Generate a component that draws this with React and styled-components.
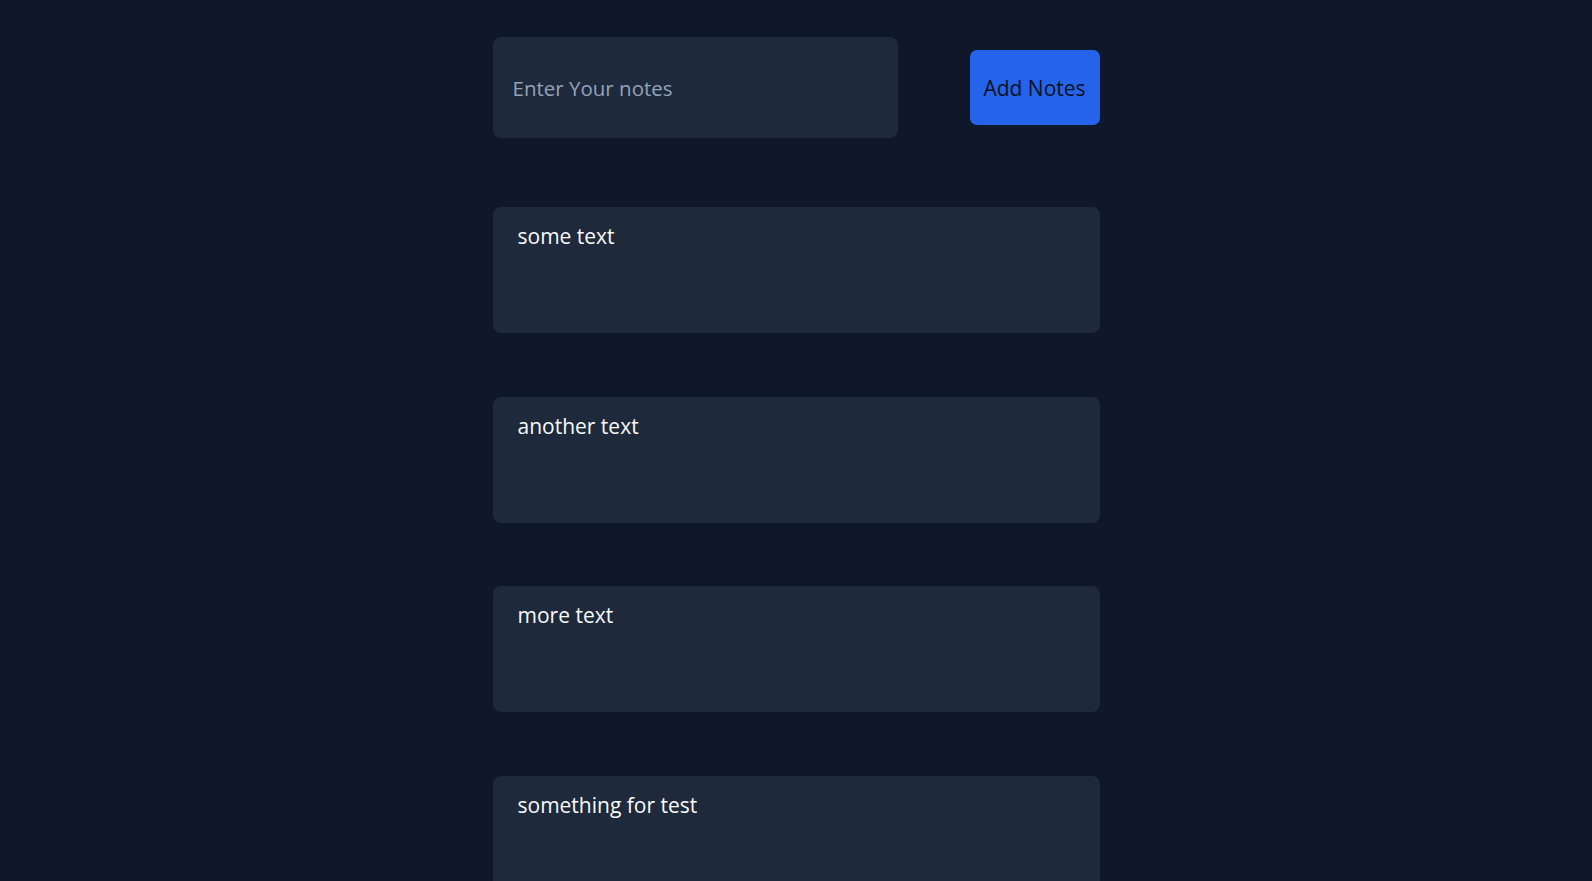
import React from 'react';
import { useState } from 'react';
import styled, { createGlobalStyle } from 'styled-components';

const colors = {
  page: '#0f172a',
  card: '#1e293b',
  blue: '#2563eb',
  placeholder: '#94a3b8',
  text: '#f8fafc',
};

const GlobalStyle = createGlobalStyle`
  html, body {
    margin: 0;
    background: ${colors.page};
    font-family: 'Open Sans', 'Noto Sans', sans-serif;
  }
`;

const Page = styled.main`
  min-height: 100vh;
  display: flex;
  justify-content: center;
  padding-top: 37px;
  box-sizing: border-box;
`;

const Column = styled.div`
  width: 607px;
  display: flex;
  flex-direction: column;
`;

const Header = styled.form`
  display: flex;
  align-items: center;
  justify-content: space-between;
  margin-bottom: 69px;
`;

const NoteInput = styled.input`
  width: 405px;
  height: 101px;
  box-sizing: border-box;
  padding: 0 20px;
  border: none;
  border-radius: 8px;
  background: ${colors.card};
  color: ${colors.text};
  font-family: inherit;
  font-size: 20.5px;
  outline: none;

  &::placeholder {
    color: ${colors.placeholder};
  }
`;

const AddButton = styled.button`
  width: 130px;
  height: 75px;
  padding: 0;
  border: none;
  border-radius: 7px;
  background: ${colors.blue};
  color: #0b1120;
  font-family: inherit;
  font-size: 21px;
  cursor: pointer;
`;

const NotesList = styled.div`
  display: flex;
  flex-direction: column;
  gap: 63.5px;
`;

const NoteCard = styled.div`
  height: 126px;
  box-sizing: border-box;
  padding: 14px 25px;
  border-radius: 8px;
  background: ${colors.card};
  color: ${colors.text};
  font-size: 21px;
  line-height: 30px;
`;

const App = () => {
  const [value, setValue] = useState('');
  const [notes, setNotes] = useState([
    'some text',
    'another text',
    'more text',
    'something for test',
  ]);

  const addNote = (e) => {
    e.preventDefault();
    if (!value.trim()) return;
    setNotes([...notes, value]);
    setValue('');
  };

  return (
    <>
      <GlobalStyle />
      <Page>
        <Column>
          <Header onSubmit={addNote}>
            <NoteInput
              placeholder='Enter Your notes'
              value={value}
              onChange={(e) => setValue(e.target.value)}
            />
            <AddButton type='submit'>Add Notes</AddButton>
          </Header>
          <NotesList>
            {notes.map((note, index) => (
              <NoteCard key={index}>{note}</NoteCard>
            ))}
          </NotesList>
        </Column>
      </Page>
    </>
  );
};

export default App;
